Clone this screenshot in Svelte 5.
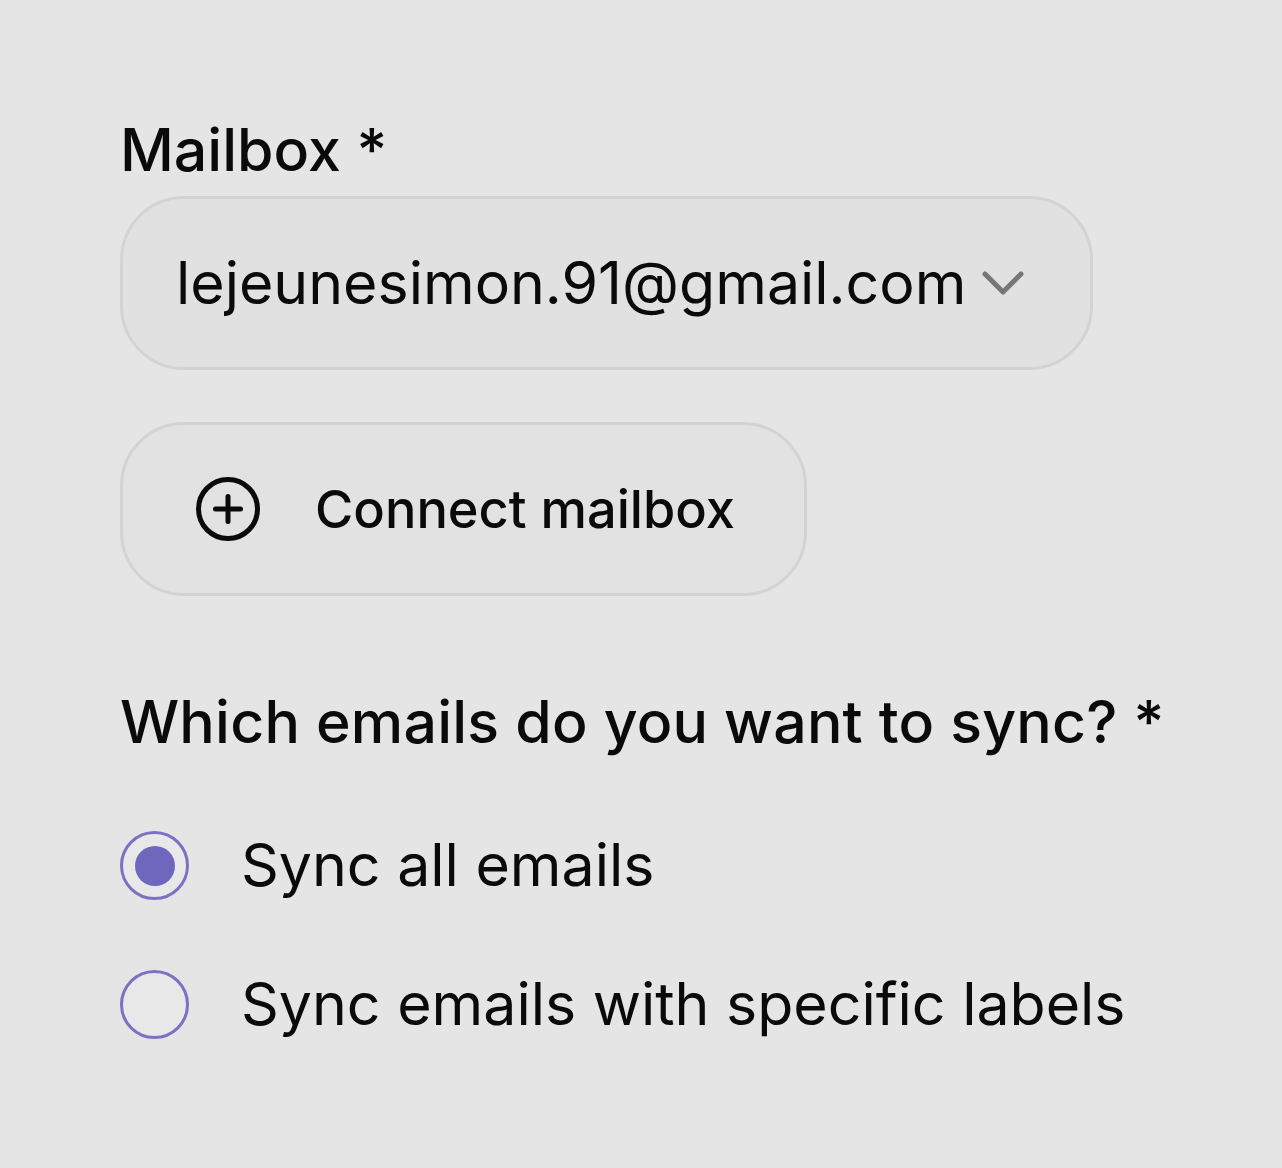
<script>
let mailbox = "lejeunesimon.91@gmail.com";
let sync = "all";
const options = [
    { id: "all", label: "Sync all emails" },
    { id: "labels", label: "Sync emails with specific labels" }
];
</script>

<div class="page">
    <div class="label mailbox-label">Mailbox *</div>
    <div class="select">
        <span class="value">{mailbox}</span>
        <svg class="chevron" width="42" height="24" viewBox="0 0 42 24" fill="none">
            <path d="M3 3 L21 21 L39 3" stroke="#777" stroke-width="5" stroke-linecap="round" stroke-linejoin="round" />
        </svg>
    </div>
    <button class="connect">
        <svg width="66" height="66" viewBox="0 0 66 66" fill="none">
            <circle cx="33" cy="33" r="29.5" stroke="#0a0a0a" stroke-width="5" />
            <path d="M33 20.5 V45.5 M20.5 33 H45.5" stroke="#0a0a0a" stroke-width="5" stroke-linecap="round" />
        </svg>
        <span>Connect mailbox</span>
    </button>
    <div class="label sync-label">Which emails do you want to sync? *</div>
    <div class="options">
        {#each options as opt}
            <div class="option">
                <span class="radio" class:on={sync === opt.id}></span>
                <span class="option-text">{opt.label}</span>
            </div>
        {/each}
    </div>
</div>

<style>
    :global(body) {
        background: #e5e5e5;
    }
    .page {
        box-sizing: border-box;
        height: 1168px;
        padding: 116px 0 0 120px;
        font-family: Inter, "Liberation Sans", sans-serif;
        color: #0a0a0a;
        display: flex;
        flex-direction: column;
        align-items: flex-start;
        overflow: hidden;
    }
    .label {
        font-size: 59px;
        font-weight: 500;
        line-height: 68px;
        white-space: nowrap;
    }
    .mailbox-label {
        margin-bottom: 12px;
    }
    .select {
        box-sizing: border-box;
        width: 973px;
        height: 174px;
        border: 3px solid #d3d3d3;
        border-radius: 64px;
        background: #e1e1e1;
        display: flex;
        align-items: center;
        padding-left: 53px;
        font-size: 59px;
        white-space: nowrap;
    }
    .value {
        line-height: 66px;
        margin-bottom: 1px;
    }
    .chevron {
        margin-left: 16px;
    }
    .connect {
        box-sizing: border-box;
        width: 687px;
        height: 174px;
        margin-top: 52px;
        border: 3px solid #d3d3d3;
        border-radius: 64px;
        background: #e2e2e2;
        display: flex;
        align-items: center;
        gap: 54px;
        padding: 0 0 0 72px;
        font-family: inherit;
        font-size: 52.3px;
        font-weight: 500;
        color: #0a0a0a;
        white-space: nowrap;
    }
    .sync-label {
        margin-top: 92px;
        letter-spacing: 0.2px;
    }
    .options {
        margin-top: 75px;
        display: flex;
        flex-direction: column;
        gap: 70px;
    }
    .option {
        display: flex;
        align-items: center;
        gap: 52px;
        height: 69px;
        font-size: 59px;
        white-space: nowrap;
    }
    .option-text {
        line-height: 66px;
        margin-bottom: 2px;
    }
    .radio {
        box-sizing: border-box;
        width: 69px;
        height: 69px;
        border: 3.5px solid #7c72c4;
        border-radius: 50%;
        background: #e8e8e8;
        display: flex;
        align-items: center;
        justify-content: center;
    }
    .radio.on::after {
        content: "";
        width: 40px;
        height: 40px;
        border-radius: 50%;
        background: #6f66bd;
    }
</style>
